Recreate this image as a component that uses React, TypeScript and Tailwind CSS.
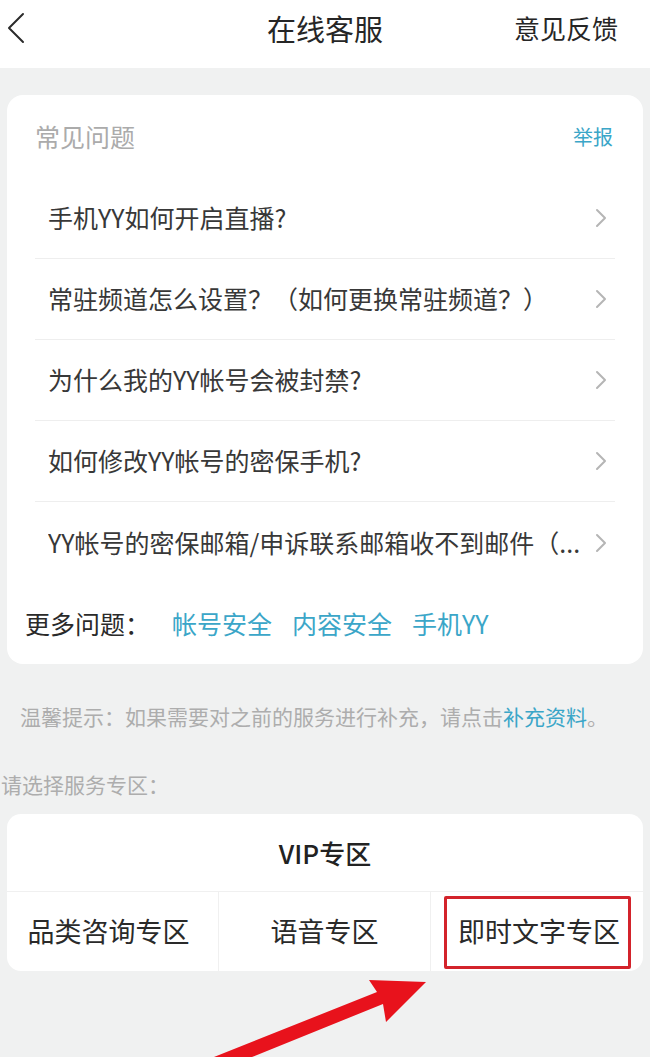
import React from 'react';

const faqs = [
  '手机YY如何开启直播?',
  '常驻频道怎么设置？（如何更换常驻频道？）',
  '为什么我的YY帐号会被封禁?',
  '如何修改YY帐号的密保手机?',
  'YY帐号的密保邮箱/申诉联系邮箱收不到邮件（...',
];

const moreLinks = ['帐号安全', '内容安全', '手机YY'];

const Chevron: React.FC = () => (
  <svg width="12" height="20" viewBox="0 0 12 20" fill="none" className="shrink-0">
    <path d="M2 2l8 8-8 8" stroke="#b5b5b5" strokeWidth="2" strokeLinecap="round" strokeLinejoin="round" />
  </svg>
);

const App: React.FC = () => {
  return (
    <div className="relative min-h-[1057px] w-[650px] bg-[#f0f1f1] font-['Noto_Sans_CJK_SC','Noto_Sans',sans-serif] overflow-hidden">
      {/* Header */}
      <div className="flex h-[68px] items-center bg-white pb-[12px]">
        <div className="w-[150px] pl-[7px]">
          <svg width="18" height="32" viewBox="0 0 18 32" fill="none">
            <path d="M16 2L2 16l14 14" stroke="#2b2b2b" strokeWidth="2" strokeLinecap="round" strokeLinejoin="round" />
          </svg>
        </div>
        <div className="flex-1 whitespace-nowrap text-center text-[29px] leading-none text-[#262626]">在线客服</div>
        <div className="w-[150px] whitespace-nowrap pr-[32px] text-right text-[26px] leading-none text-[#262626]">意见反馈</div>
      </div>

      {/* FAQ card */}
      <div className="mx-[7px] mt-[27px] rounded-[16px] bg-white">
        <div className="flex h-[83px] items-center justify-between pl-[28px] pr-[30px]">
          <span className="text-[25px] text-[#ababab]">常见问题</span>
          <span className="text-[20px] text-[#3ba6c8]">举报</span>
        </div>
        <div className="mx-[28px]">
          {faqs.map((q, i) => (
            <div
              key={q}
              className={`flex h-[81px] items-center justify-between gap-[6px] pl-[13px] pr-[8px] ${i < faqs.length - 1 ? 'border-b border-[#eeeeee]' : ''}`}
            >
              <span className="truncate text-[25px] text-[#383838]">{q}</span>
              <Chevron />
            </div>
          ))}
        </div>
        <div className="flex h-[81px] items-center pl-[18px]">
          <span className="text-[25px] text-[#2a2a2a]">更多问题：</span>
          <div className="ml-[22px] flex gap-[20px]">
            {moreLinks.map((l) => (
              <span key={l} className="text-[25px] text-[#3ba6c8]">{l}</span>
            ))}
          </div>
        </div>
      </div>

      {/* Tips */}
      <div className="pl-[20px] pt-[38px] text-[21px] leading-[28px] text-[#adadad]">
        温馨提示：如果需要对之前的服务进行补充，请点击<span className="text-[#3ba6c8]">补充资料</span>。
      </div>
      <div className="mt-[40px] pl-[1px] text-[21px] leading-[28px] text-[#adadad]">请选择服务专区：</div>

      {/* Service zones */}
      <div className="mx-[7px] mt-[16px] rounded-[14px] bg-white">
        <div className="flex h-[78px] items-center justify-center border-b border-[#f0f0f0] text-[26px] font-medium text-[#222222]">
          VIP专区
        </div>
        <div className="grid h-[79px] grid-cols-3">
          <div className="flex items-center justify-center border-r border-[#f0f0f0] pr-[8px] text-[27px] text-[#2a2a2a]">品类咨询专区</div>
          <div className="flex items-center justify-center border-r border-[#f0f0f0] text-[27px] text-[#2a2a2a]">语音专区</div>
          <div className="relative flex items-center justify-center pl-[4px] text-[27px] text-[#2a2a2a]">
            即时文字专区
            <div className="pointer-events-none absolute bottom-[2px] left-[13px] right-[12px] top-[4px] rounded-[2px] border-[3px] border-[#d3232b]" />
          </div>
        </div>
      </div>

      {/* Annotation arrow */}
      <svg className="pointer-events-none absolute left-0 top-0" width="650" height="1057" viewBox="0 0 650 1057">
        <polygon points="214,1057 377,992 369,980 426,982 386,1022 383,1004 252,1057" fill="#e8121c" />
      </svg>
    </div>
  );
};

export default App;
